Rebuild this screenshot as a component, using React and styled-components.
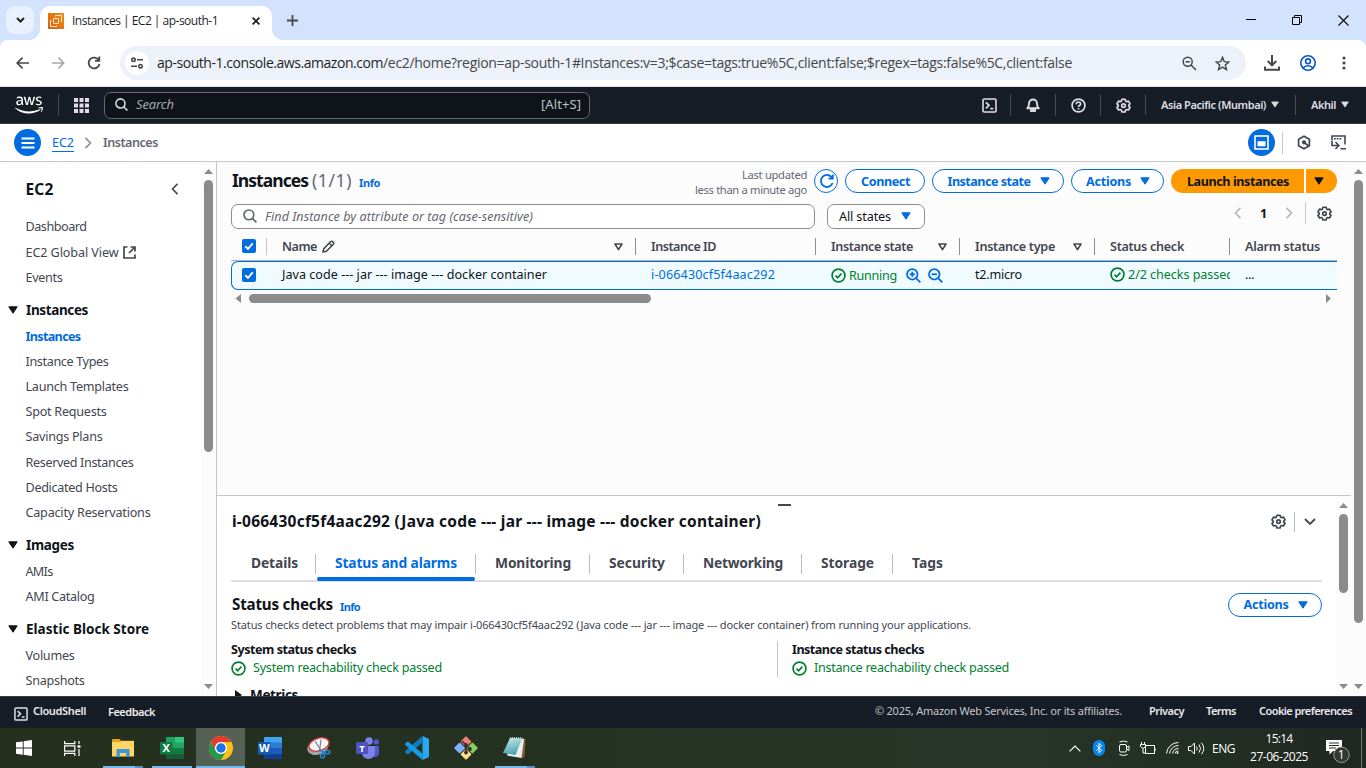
import React, { useLayoutEffect, useRef } from 'react';
import styled, { createGlobalStyle, css } from 'styled-components';
import { FaAws } from 'react-icons/fa';

const Global = createGlobalStyle`
  * { box-sizing: border-box; }
  body { margin: 0; overflow: hidden; background: #fff; }
  svg { display: block; flex: none; }
`;

const UI = `'Noto Sans', 'Open Sans', sans-serif`;
const SEGOE = `'Open Sans', 'Noto Sans', sans-serif`;

/* ---------- text that tracks itself to a given width ---------- */
const Fitted = styled.span`
  display: inline-block;
  white-space: pre;
`;
function Fit({ w, children }) {
  const ref = useRef(null);
  useLayoutEffect(() => {
    const el = ref.current;
    el.style.letterSpacing = '0px';
    const natural = el.getBoundingClientRect().width;
    el.style.letterSpacing = `${(w - natural) / el.textContent.length}px`;
  }, [w, children]);
  return <Fitted ref={ref}>{children}</Fitted>;
}

/* ---------- shared pieces ---------- */
const Screen = styled.div`
  width: 1366px;
  height: 768px;
  display: flex;
  flex-direction: column;
  overflow: hidden;
  font-family: ${UI};
  font-size: 12.6px;
  color: #0f141a;
`;
const Push = styled.div`flex: 1;`;
const Rule = styled.div`
  width: 1px;
  height: ${p => p.$h || 20}px;
  background: ${p => p.$c || '#b6bec9'};
  flex: none;
`;
const Slot = styled.div`
  width: ${p => p.$w}px;
  height: ${p => (p.$h ? `${p.$h}px` : 'auto')};
  padding-top: ${p => p.$pt || 0}px;
  display: flex;
  align-items: center;
  justify-content: center;
  flex: none;
`;

const Svg = ({ s = 16, w, h, box, children, ...rest }) => (
  <svg width={w || s} height={h || s} viewBox={box || `0 0 ${w || s} ${h || s}`} fill="none" {...rest}>{children}</svg>
);
const Down = ({ w = 10, h = 8, c = 'currentColor' }) => (
  <Svg w={w} h={h} box="0 0 10 8"><path d="M.8.8h8.4L5 7.2z" fill={c} stroke={c} strokeWidth="1" strokeLinejoin="round" /></Svg>
);
const SortMark = () => (
  <Svg w={9} h={8}><path d="M1 1h7L4.500 6.600z" stroke="#424650" strokeWidth="1.600" strokeLinejoin="round" /></Svg>
);
const Gear = ({ s = 16, c = '#424650' }) => (
  <Svg s={s} box="0 0 16 16" stroke={c} strokeWidth="1.800" strokeLinejoin="round">
    <path d="M6.300 1.300h3.400l.5 1.900 1.200.7 1.900-.5 1.700 2.900-1.400 1.200v1.200l1.400 1.200-1.700 2.900-1.900-.5-1.200.7-.5 1.900H6.300l-.5-1.900-1.200-.7-1.900.5L1 9.900l1.400-1.200V7.500L1 6.300l1.700-2.900 1.900.5 1.200-.7z" />
    <circle cx="8" cy="8.100" r="1.900" />
  </Svg>
);
const Lens = ({ s = 16, c = '#656871', mark }) => (
  <Svg s={s} box="0 0 16 16" stroke={c} strokeWidth="1.900">
    <circle cx="6.700" cy="6.700" r="5.600" /><path d="M10.700 10.700 15.300 15.300" />
    {mark && <path d="M3.900 6.700h5.600" />}
    {mark === 'plus' && <path d="M6.700 3.900v5.600" />}
  </Svg>
);
const Terminal = ({ s = 15, c = '#dedee3' }) => (
  <Svg s={s} box="0 0 15 15" stroke={c}>
    <rect x="1" y="1" width="13" height="13" rx="1.200" strokeWidth="1.600" />
    <path d="M3.900 4.300 7 7.300l-3.100 3M8.300 10.700h3" strokeWidth="1.700" />
  </Svg>
);
const Ok = () => (
  <Svg s={15} stroke="#00802f" strokeWidth="1.700">
    <circle cx="7.500" cy="7.500" r="6.400" /><path d="m4.500 7.700 2.100 2.100 3.800-4.200" />
  </Svg>
);
const Chevron = ({ d = 'right', c = '#424650', w = 8, h = 13, t = 1.7 }) => (
  <Svg w={w} h={h} box="0 0 8 13" stroke={c} strokeWidth={t}>
    <path d={d === 'right' ? 'M1.300 1l5.400 5.500L1.300 12' : 'M6.700 1 1.300 6.500 6.700 12'} />
  </Svg>
);

/* ---------- browser chrome ---------- */
const TabStrip = styled.div`
  height: 40px;
  background: #d3e3fd;
  display: flex;
  align-items: center;
  font-family: ${SEGOE};
  font-size: 12px;
  color: #1f1f1f;
  flex: none;
`;
const TabSearch = styled.div`
  width: 28px;
  height: 28px;
  margin-left: 6px;
  border-radius: 9px;
  background: #e9f1fe;
  display: flex;
  align-items: center;
  justify-content: center;
`;
const Tab = styled.div`
  position: relative;
  width: 232px;
  height: 34px;
  margin: 6px 0 0 6px;
  padding: 0 12px 5px 8px;
  background: #fff;
  border-radius: 10px 10px 0 0;
  display: flex;
  align-items: center;
  gap: 8px;
  &::before, &::after {
    content: '';
    position: absolute;
    bottom: 0;
    width: 10px;
    height: 10px;
  }
  &::before { left: -10px; background: radial-gradient(circle at 0 0, transparent 9.500px, #fff 10px); }
  &::after { right: -10px; background: radial-gradient(circle at 100% 0, transparent 9.500px, #fff 10px); }
`;
const WinButtons = styled.div`
  display: flex;
  margin-left: auto;
`;
const ToolbarBack = styled.div`
  background: #d3e3fd;
  flex: none;
`;
const Toolbar = styled.div`
  height: 47px;
  background: #fff;
  border-bottom: 1px solid #dfe1e5;
  border-radius: 8px 8px 0 0;
  display: flex;
  align-items: center;
  color: #45474a;
`;
const UrlBar = styled.div`
  width: 1126px;
  height: 34px;
  margin: 0 8px 0 4px;
  padding: 0 16px 0 5px;
  border-radius: 17px;
  background: #ecf1fa;
  display: flex;
  align-items: center;
`;
const SiteInfo = styled.div`
  width: 24px;
  height: 24px;
  border-radius: 12px;
  background: #fff;
  margin-right: 8px;
  display: flex;
  align-items: center;
  justify-content: center;
`;
const Url = styled.div`
  margin-top: -1px;
  display: flex;
  font-family: ${SEGOE};
  font-size: 14px;
  color: #474747;
`;
const Host = styled.span`color: #1f1f1f;`;

const Browser = () => (
  <>
    <TabStrip>
      <TabSearch><Svg w={9} h={6} stroke="#1f1f1f" strokeWidth="2"><path d="M1 1l3.500 3.500L8 1" /></Svg></TabSearch>
      <Tab>
        <Svg s={16}>
          <defs><linearGradient id="tabOrange" x1="0" y1="1" x2="1" y2="0"><stop stopColor="#d4600f" /><stop offset="1" stopColor="#f58f0c" /></linearGradient></defs>
          <rect width="16" height="16" fill="url(#tabOrange)" />
          <g stroke="#fff" strokeWidth="1" opacity=".85"><rect x="5.500" y="5.500" width="5" height="5" rx=".6" /><path d="M7.500 3.500v-1h6v6h-1M8.500 12.500v1h-6v-6h1" /></g>
        </Svg>
        <Fit w={146}>Instances | EC2 | ap-south-1</Fit>
        <Push />
        <Svg s={8} stroke="#1f1f1f" strokeWidth="1.800"><path d="M.6.6l6.800 6.800M7.400.6.6 7.400" /></Svg>
      </Tab>
      <Slot $w={40}><Svg s={11} stroke="#474747" strokeWidth="1.800"><path d="M5.500 0v11M0 5.500h11" /></Svg></Slot>
      <WinButtons>
        <Slot $w={46}><Svg w={10} h={10}><path d="M0 4.500h10" stroke="#000" /></Svg></Slot>
        <Slot $w={46}><Svg s={10} stroke="#000"><path d="M.5 2.500h7v7h-7zM2.500 2.500v-2h7v7h-2" /></Svg></Slot>
        <Slot $w={46}><Svg s={11} stroke="#000" strokeWidth="1.100"><path d="M.5.5l10 10M10.500.5l-10 10" /></Svg></Slot>
      </WinButtons>
    </TabStrip>
    <ToolbarBack>
      <Toolbar>
        <Slot $w={44}><Svg w={13} h={12} stroke="#474747" strokeWidth="1.700"><path d="M6.500.6 1.200 6l5.300 5.400M1 6h12" /></Svg></Slot>
        <Slot $w={28}><Svg w={13} h={12} stroke="#a3a5a8" strokeWidth="1.500"><path d="M6.500.6 11.800 6l-5.300 5.400M12 6H0" /></Svg></Slot>
        <Slot $w={44}><Svg s={14} stroke="#474747" strokeWidth="1.800"><path d="M11.800 4.300A5.400 5.400 0 1 0 12.400 8M12.300.6v4.200H8" /></Svg></Slot>
        <UrlBar>
          <SiteInfo>
            <Svg w={12} h={12} stroke="#474747" strokeWidth="1.600"><circle cx="2.500" cy="2.800" r="1.700" /><path d="M6 2.800h6M0 9.200h6" /><circle cx="9.500" cy="9.200" r="1.700" /></Svg>
          </SiteInfo>
          <Url>
            <Host><Fit w={226}>ap-south-1.console.aws.amazon.com</Fit></Host>
            <Fit w={689}>/ec2/home?region=ap-south-1#Instances:v=3;$case=tags:true%5C,client:false;$regex=tags:false%5C,client:false</Fit>
          </Url>
          <Push />
          <Svg s={15} stroke="#474747" strokeWidth="1.500"><circle cx="5.700" cy="5.700" r="4.500" /><path d="m9 9 5 5M3.500 5.700h4.400" /></Svg>
          <Slot $w={18} />
          <Svg s={15} stroke="#474747" strokeWidth="1.400"><path d="m7.500 1.300 1.700 4.300 4.700.4-3.600 3 1.200 4.600-4-2.500-4 2.500L4.700 9 1.100 6l4.700-.4z" /></Svg>
        </UrlBar>
        <Slot $w={36}>
          <Svg w={16} h={16} stroke="#474747" strokeWidth="2"><path d="M8 0v10M3.700 6 8 10.300 12.300 6M1 11.500v3.200h14v-3.200" /></Svg>
        </Slot>
        <Slot $w={36}>
          <Svg s={16} stroke="#0b57d0" strokeWidth="1.600"><circle cx="8" cy="8" r="7.200" /><circle cx="8" cy="6.300" r="2.400" /><path d="M3 13c1.200-1.600 3-2.300 5-2.300s3.800.7 5 2.300" /></Svg>
        </Slot>
        <Slot $w={36}>
          <Svg w={4} h={14}><g fill="#474747"><circle cx="2" cy="2" r="1.600" /><circle cx="2" cy="7" r="1.600" /><circle cx="2" cy="12" r="1.600" /></g></Svg>
        </Slot>
      </Toolbar>
    </ToolbarBack>
  </>
);

/* ---------- AWS top navigation ---------- */
const Nav = styled.div`
  height: 37px;
  background: #161d26;
  border-bottom: 1px solid #353d48;
  display: flex;
  align-items: center;
  color: #dedee3;
  font-size: 11px;
  font-weight: 600;
  flex: none;
`;
const Logo = styled.div`
  width: 58px;
  padding-left: 15px;
  color: #fff;
`;
const NavSearch = styled.div`
  width: 486px;
  height: 27px;
  padding: 0 8px 2px 10px;
  border: 1px solid #656871;
  border-radius: 7px;
  background: #0f141a;
  display: flex;
  align-items: center;
  gap: 8px;
  font-size: 13px;
  font-weight: 400;
  color: #c0c2c8;
  i { flex: 1; color: #a4a7ae; }
`;
const NavMenu = styled.div`
  width: ${p => p.$w}px;
  display: flex;
  align-items: center;
  gap: 5px;
  padding: 0 0 1px 15px;
`;

const NAV_RULE = '#424a55';
const GRID = [0, 5.5, 11];
const TopNav = () => (
  <Nav>
    <Logo><FaAws size={28} /></Logo>
    <Rule $h={22} $c={NAV_RULE} />
    <Slot $w={44}>
      <Svg s={15}>
        {GRID.map(y => GRID.map(x => <rect key={`${x}-${y}`} x={x} y={y} width="4" height="4" fill="#dedee3" />))}
      </Svg>
    </Slot>
    <Slot $w={1} />
    <NavSearch><Lens s={13} c="#dedee3" /><i><Fit w={38}>Search</Fit></i><Fit w={40}>[Alt+S]</Fit></NavSearch>
    <Push />
    <Slot $w={42}><Terminal /></Slot>
    <Rule $h={22} $c={NAV_RULE} />
    <Slot $w={44}>
      <Svg w={14} h={14} stroke="#dedee3" strokeWidth="1.900"><path d="M1.300 10.300C3 9 3 7.500 3 5.500a4 4 0 0 1 8 0c0 2 0 3.500 1.700 4.800z" strokeLinejoin="round" /><path d="M5 12h4v1H5z" /></Svg>
    </Slot>
    <Rule $h={22} $c={NAV_RULE} />
    <Slot $w={44}>
      <Svg s={15} stroke="#dedee3" strokeWidth="1.700"><circle cx="7.500" cy="7.500" r="6.400" /><path d="M5.300 6.200c0-3 4.300-2.800 4.300-.3 0 1.500-2.100 1.500-2.100 3.100M7.500 9.900v1.500" /></Svg>
    </Slot>
    <Rule $h={22} $c={NAV_RULE} />
    <Slot $w={44}><Gear s={15} c="#dedee3" /></Slot>
    <Rule $h={20} $c={NAV_RULE} />
    <NavMenu $w={149}><Fit w={105}>Asia Pacific (Mumbai)</Fit><Down w={8} h={7} /></NavMenu>
    <Rule $h={20} $c={NAV_RULE} />
    <NavMenu $w={70}><Fit w={25}>Akhil</Fit><Down w={8} h={7} /></NavMenu>
  </Nav>
);

/* ---------- breadcrumb ---------- */
const Crumbs = styled.div`
  height: 38px;
  background: #fff;
  border-bottom: 1px solid #c6c6cd;
  display: flex;
  align-items: center;
  padding: 0 15px 0 14px;
  flex: none;
`;
const Round = styled.div`
  width: 27px;
  height: 27px;
  border-radius: 50%;
  background: #006ce0;
  display: flex;
  align-items: center;
  justify-content: center;
`;
const CrumbLink = styled.a`
  margin-left: 11px;
  height: 18px;
  line-height: 18px;
  border-bottom: 1px solid #006ce0;
  color: #006ce0;
`;
const CrumbHere = styled.span`
  color: #656871;
  font-weight: 600;
`;
const Breadcrumb = () => (
  <Crumbs>
    <Round><Svg w={14} h={12} stroke="#fff" strokeWidth="1.800"><path d="M.5 1.500h13M.5 6h13M.5 10.500h13" /></Svg></Round>
    <CrumbLink><Fit w={22}>EC2</Fit></CrumbLink>
    <Slot $w={28}><Chevron c="#8c8c94" h={12} /></Slot>
    <Slot $w={1} />
    <CrumbHere><Fit w={55}>Instances</Fit></CrumbHere>
    <Push />
    <Round>
      <Svg s={15} stroke="#fff"><rect x="1" y="1" width="13" height="13" strokeWidth="1.600" /><path d="M3.800 6.500h7.400v4.500H3.800z" fill="#fff" strokeWidth=".6" /></Svg>
    </Round>
    <Slot $w={7} />
    <Rule $h={22} $c="#c6c6cd" />
    <Slot $w={42}>
      <Svg w={14} h={15} stroke="#424650" strokeWidth="1.700"><path d="M7 1.200 12.400 4.300v6.400L7 13.800 1.600 10.700V4.300z" strokeLinejoin="round" /><path d="m7 7.500 4.500 3.200" /><circle cx="7" cy="7.300" r="1.300" fill="#424650" /></Svg>
    </Slot>
    <Slot $w={26}>
      <Svg w={15} h={15} stroke="#424650" strokeWidth="1.600"><path d="M1 5V1h13v8.500M3 3.800h1.800M5.700 3.800h1.800M8.500 3.800h1.800" /><path d="M1 5.500v5h6M4.500 7l3.300 3.500L4.500 14M9.500 13.800H15" /></Svg>
    </Slot>
  </Crumbs>
);

/* ---------- scroll bars ---------- */
const VBar = styled.div`
  width: 15px;
  flex: none;
  background: #fcfcfc;
  display: flex;
  flex-direction: column;
  align-items: center;
  padding: 7px 0;
`;
const VThumb = styled.div`
  width: 9px;
  height: ${p => p.$h}px;
  margin: 6px 0 auto;
  border-radius: 5px;
  background: #8b8b8b;
`;
const VScroll = ({ thumb }) => (
  <VBar>
    <Svg w={9} h={5}><path d="M0 5 4.500 0 9 5z" fill="#8b8b8b" /></Svg>
    <VThumb $h={thumb} />
    <Svg w={9} h={5}><path d="M0 0 4.500 5 9 0z" fill="#8b8b8b" /></Svg>
  </VBar>
);
const HBar = styled.div`
  height: 15px;
  margin-top: 1px;
  padding: 0 6px 0 4px;
  display: flex;
  align-items: center;
  justify-content: space-between;
`;
const HThumb = styled.div`
  width: 402px;
  height: 9px;
  margin: 0 auto 0 8px;
  border-radius: 5px;
  background: #8b8b8b;
`;

/* ---------- side navigation ---------- */
const Body = styled.div`
  height: 534px;
  display: flex;
  flex: none;
`;
const Side = styled.div`
  width: 217px;
  border-right: 1px solid #c6c6cd;
  display: flex;
  flex: none;
  overflow: hidden;
`;
const SideList = styled.div`
  flex: 1;
  height: 534px;
  overflow: hidden;
  padding-left: 25.500px;
`;
const SideHead = styled.div`
  height: 52.300px;
  padding: 1.500px 22px 0 0;
  display: flex;
  align-items: center;
  justify-content: space-between;
  font-size: 15.500px;
  font-weight: 700;
`;
const SideItem = styled.div`
  height: 25.200px;
  padding-top: .1px;
  display: flex;
  align-items: center;
  gap: 4px;
  color: ${p => (p.$on ? '#006ce0' : '#424650')};
  font-weight: ${p => (p.$on ? 700 : 400)};
`;
const SideGroup = styled.div`
  height: 33.600px;
  margin-left: -17.500px;
  padding-top: 6.400px;
  display: flex;
  align-items: center;
  gap: 8px;
  font-size: 13.500px;
  font-weight: 700;
`;
const MENU = [
  [null, 0, [['Dashboard', 61], ['EC2 Global View', 93], ['Events', 37]]],
  ['Instances', 62, [['Instances', 55], ['Instance Types', 83], ['Launch Templates', 103], ['Spot Requests', 81], ['Savings Plans', 77], ['Reserved Instances', 108], ['Dedicated Hosts', 92], ['Capacity Reservations', 125]]],
  ['Images', 48, [['AMIs', 27], ['AMI Catalog', 69]]],
  ['Elastic Block Store', 123, [['Volumes', 49], ['Snapshots', 59]]],
];
const Sidebar = () => (
  <Side>
    <SideList>
      <SideHead><Fit w={28}>EC2</Fit><Chevron d="left" h={12} /></SideHead>
      {MENU.map(([group, gw, items]) => (
        <React.Fragment key={group || 'top'}>
          {group && <SideGroup><Down /><Fit w={gw}>{group}</Fit></SideGroup>}
          {items.map(([name, w]) => (
            <SideItem key={name} $on={group === 'Instances' && name === 'Instances'}>
              <Fit w={w}>{name}</Fit>
              {name === 'EC2 Global View' && (
                <Svg s={13} stroke="#424650" strokeWidth="1.700"><path d="M4.500 1H1v11h11V8.500M7.500 1H12v4.500M12 1 6 7" /></Svg>
              )}
            </SideItem>
          ))}
        </React.Fragment>
      ))}
    </SideList>
    <VScroll thumb={272} />
  </Side>
);

/* ---------- instances list ---------- */
const Content = styled.div`
  flex: 1;
  min-width: 0;
  display: flex;
  flex-direction: column;
  background: #fcfcfd;
`;
const ListArea = styled.div`
  height: 333px;
  padding: 7px 14px 0;
`;
const HeadRow = styled.div`
  height: 24px;
  display: flex;
  align-items: center;
`;
const H1 = styled.div`
  padding-left: 1px;
  margin-top: -2px;
  font-size: 17.500px;
  font-weight: 700;
  display: flex;
  gap: 4px;
  span + span { font-weight: 400; color: #656871; }
`;
const Info = styled.a`
  margin-left: ${p => p.$ml || 7}px;
  padding-top: 3px;
  font-size: 11px;
  font-weight: 700;
  color: #006ce0;
`;
const Updated = styled.div`
  margin-right: 7px;
  padding-top: 1px;
  display: flex;
  flex-direction: column;
  align-items: flex-end;
  font-size: 11.200px;
  line-height: 15px;
  color: #656871;
`;
const Buttons = styled.div`
  display: flex;
  gap: 7px;
`;
const Pill = styled.div`
  width: ${p => p.$w}px;
  height: 24px;
  padding-left: 1px;
  border: 1.500px solid #006ce0;
  border-radius: 13px;
  background: #fff;
  display: flex;
  align-items: center;
  justify-content: center;
  gap: 9px;
  font-size: 12.600px;
  font-weight: 700;
  color: #006ce0;
  ${p => p.$primary && css`
    border: 0;
    background: #ff9900;
    color: #0f141a;
    border-radius: ${p.$primary === 'left' ? '12px 0 0 12px' : '0 12px 12px 0'};
  `}
  ${p => p.$primary === 'right' && css`padding: 0 5px 0 0;`}
`;
const Split = styled.div`
  display: flex;
  gap: 2px;
`;
const FilterRow = styled.div`
  height: 25px;
  margin-top: 11px;
  display: flex;
  align-items: center;
`;
const Field = styled.div`
  width: ${p => p.$w}px;
  height: 25px;
  margin-right: 12px;
  padding: 0 11px 1px;
  border: 1px solid #8c8c94;
  border-radius: 7px;
  background: #fff;
  display: flex;
  align-items: center;
  gap: ${p => p.$gap || 8}px;
  i { color: #656871; }
`;
const PageNo = styled.div`
  width: 43px;
  text-align: center;
  font-weight: 700;
`;
const Pager = styled.div`
  display: flex;
  align-items: center;
  margin: -7px 5px 0 0;
`;
const Cols = styled.div`
  display: grid;
  grid-template-columns: ${p => p.$first || 36}px 369px 180px 144px 135px 135px 107px;
  align-items: center;
`;
const THead = styled(Cols)`
  height: 32px;
  padding-top: 4px;
  border-bottom: 1px solid #b4b4bb;
  font-weight: 600;
  color: #424650;
`;
const Th = styled.div`
  height: 17px;
  padding: 0 ${p => (p.$pl ? 0 : 12)}px 0 ${p => p.$pl ?? 15}px;
  border-right: ${p => (p.$last ? 0 : 1)}px solid ${p => p.$c || '#8c8c94'};
  display: flex;
  align-items: center;
  gap: 5px;
`;
const TRow = styled(Cols)`
  height: 29px;
  border: 1px solid #006ce0;
  border-right: 0;
  border-radius: 7px 0 0 7px;
  background: #f0fbff;
`;
const Td = styled.div`
  margin-top: ${p => (p.$up ? -2 : 0)}px;
  padding-left: ${p => p.$pl ?? 15}px;
  display: flex;
  align-items: center;
  gap: 3px;
  overflow: hidden;
  white-space: nowrap;
  color: ${p => p.$c || 'inherit'};
`;
const Box = styled.div`
  width: 14px;
  height: 14px;
  margin-bottom: 1px;
  border-radius: 2px;
  background: #006ce0;
  display: flex;
  align-items: center;
  justify-content: center;
  flex: none;
`;
const Check = () => <Box><Svg s={10} stroke="#fff" strokeWidth="1.900"><path d="m1.300 5.300 2.700 2.600 4.700-5.600" /></Svg></Box>;

const List = () => (
  <ListArea>
    <HeadRow>
      <H1><Fit w={76}>Instances</Fit><Fit w={40}>(1/1)</Fit></H1>
      <Info><Fit w={21}>Info</Fit></Info>
      <Push />
      <Updated><Fit w={65}>Last updated</Fit><Fit w={112}>less than a minute ago</Fit></Updated>
      <Buttons>
        <Pill $w={24}>
          <Svg s={14} stroke="#006ce0" strokeWidth="1.800"><path d="M12.600 9A6 6 0 1 1 12 3.700M12.800.5v4.200H8.500" /></Svg>
        </Pill>
        <Pill $w={80}><Fit w={49}>Connect</Fit></Pill>
        <Pill $w={132}><Fit w={83}>Instance state</Fit><Down /></Pill>
        <Pill $w={93}><Fit w={45}>Actions</Fit><Down /></Pill>
        <Split>
          <Pill $w={133} $primary="left"><Fit w={102}>Launch instances</Fit></Pill>
          <Pill $w={31} $primary="right"><Down /></Pill>
        </Split>
      </Buttons>
    </HeadRow>
    <FilterRow>
      <Field $w={584}><Lens s={14} /><i><Fit w={268}>Find Instance by attribute or tag (case-sensitive)</Fit></i></Field>
      <Field $w={98} $gap={10}><Fit w={52}>All states</Fit><Down c="#006ce0" /></Field>
      <Push />
      <Pager>
        <Chevron d="left" c="#b4b4bb" h={12} /><PageNo>1</PageNo><Chevron c="#b4b4bb" h={12} />
        <Slot $w={24}><Rule $h={22} $c="#c6c6cd" /></Slot>
        <Gear s={15} />
      </Pager>
    </FilterRow>
    <THead>
      <Th $pl={11} $c="#c6c6cd"><Check /></Th>
      <Th>
        <Fit w={35}>Name</Fit>
        <Svg s={13} stroke="#424650" strokeWidth="1.600"><path d="M1 12 1.700 8.800 8.500 1.800c1.500-1.500 4.200 1.100 2.700 2.700L4.400 11.300zM7.200 3.200l2.600 2.600" strokeLinejoin="round" /></Svg>
        <Push /><SortMark />
      </Th>
      <Th><Fit w={65}>Instance ID</Fit></Th>
      <Th><Fit w={82}>Instance state</Fit><Push /><SortMark /></Th>
      <Th><Fit w={80}>Instance type</Fit><Push /><SortMark /></Th>
      <Th><Fit w={74}>Status check</Fit></Th>
      <Th $last><Fit w={75}>Alarm status</Fit></Th>
    </THead>
    <TRow $first={35}>
      <Td $pl={10}><Check /></Td>
      <Td $up><Fit w={265}>Java code --- jar --- image --- docker container</Fit></Td>
      <Td $up $c="#006ce0"><Fit w={124}>i-066430cf5f4aac292</Fit></Td>
      <Td $c="#00802f">
        <Ok /><Fit w={48}>Running</Fit><Slot $w={3} /><Lens s={15} c="#006ce0" mark="plus" /><Slot $w={1} /><Lens s={15} c="#006ce0" mark="minus" />
      </Td>
      <Td $up><Fit w={47}>t2.micro</Fit></Td>
      <Td $up $c="#00802f"><Ok /><Fit w={106}>2/2 checks passed</Fit></Td>
      <Td $up><Fit w={9}>...</Fit></Td>
    </TRow>
    <HBar>
      <Svg w={6} h={9}><path d="M6 0 .5 4.500 6 9z" fill="#8b8b8b" /></Svg>
      <HThumb />
      <Svg w={5} h={9}><path d="M0 0l5 4.500L0 9z" fill="#8b8b8b" /></Svg>
    </HBar>
  </ListArea>
);

/* ---------- details panel ---------- */
const Panel = styled.div`
  height: 201px;
  border-top: 1px solid #c6c6cd;
  background: #fff;
  display: flex;
  overflow: hidden;
`;
const PanelBody = styled.div`
  flex: 1;
  min-width: 0;
  padding: 0 14px;
  display: flex;
  flex-direction: column;
`;
const Handle = styled.div`
  width: 13px;
  height: 2px;
  margin: 8px 531px 0 auto;
  background: #424650;
  flex: none;
`;
const PanelHead = styled.div`
  height: 31px;
  padding: 0 5px 0 1px;
  display: flex;
  align-items: center;
  flex: none;
`;
const PanelTitle = styled.div`
  margin-top: -2px;
  font-size: 15.500px;
  font-weight: 700;
`;
const Tabs = styled.div`
  height: 45px;
  border-bottom: 2px solid #dedee3;
  display: flex;
  font-size: 13.800px;
  font-weight: 700;
  color: #424650;
  flex: none;
`;
const TabItem = styled.div`
  position: relative;
  width: ${p => p.$w}px;
  padding-left: 20px;
  padding-bottom: 8px;
  display: flex;
  align-items: flex-end;
  line-height: 18px;
  color: ${p => (p.$on ? '#006ce0' : 'inherit')};
  &::before {
    content: '';
    position: absolute;
    left: 0;
    top: 17px;
    width: 1px;
    height: 20px;
    background: ${p => (p.$first ? 'transparent' : '#b6bec9')};
  }
  ${p => p.$on && css`
    &::after {
      content: '';
      position: absolute;
      left: 2px;
      right: 0;
      bottom: -1px;
      height: 4px;
      border-radius: 2px;
      background: #006ce0;
    }
  `}
`;
const SectionHead = styled.div`
  height: 35px;
  padding: 10px 0 0 1px;
  display: flex;
  align-items: center;
  flex: none;
`;
const SectionTitle = styled.div`
  margin-top: -2px;
  font-size: 15.200px;
  font-weight: 700;
`;
const Note = styled.div`
  height: 16px;
  line-height: 15px;
  font-size: 11px;
  color: #424650;
  flex: none;
`;
const Checks = styled.div`
  height: 36px;
  margin-top: 8px;
  display: flex;
  flex: none;
`;
const CheckCol = styled.div`
  width: ${p => (p.$pl ? 545 : 546)}px;
  padding-left: ${p => p.$pl || 0}px;
  border-left: ${p => (p.$pl ? '1px solid #c6c6cd' : '0')};
  line-height: 18px;
`;
const CheckName = styled.div`
  font-size: 12.600px;
  font-weight: 700;
  height: 18px;
`;
const CheckState = styled.div`
  height: 18px;
  display: flex;
  align-items: center;
  gap: 7px;
  color: #00802f;
`;
const Metrics = styled.div`
  height: 24px;
  margin-top: 6px;
  padding-left: 4px;
  display: flex;
  align-items: center;
  gap: 8px;
  font-size: 13.500px;
  font-weight: 700;
  flex: none;
`;
const TABS = [['Details', 47, 84], ['Status and alarms', 122, 160], ['Monitoring', 76, 114], ['Security', 56, 94], ['Networking', 80, 118], ['Storage', 53, 91], ['Tags', 31, 80]];
const Details = () => (
  <Panel>
    <PanelBody>
      <Handle />
      <PanelHead>
        <PanelTitle><Fit w={529}>i-066430cf5f4aac292 (Java code --- jar --- image --- docker container)</Fit></PanelTitle>
        <Push />
        <Gear s={15} />
        <Slot $w={17}><Rule $h={20} /></Slot>
        <Slot $w={14}><Svg w={12} h={8} stroke="#424650" strokeWidth="1.800"><path d="m1 1 5 5 5-5" /></Svg></Slot>
      </PanelHead>
      <Tabs>
        {TABS.map(([name, w, tw], i) => (
          <TabItem key={name} $w={tw} $on={i === 1} $first={i === 0}><Fit w={w}>{name}</Fit></TabItem>
        ))}
      </Tabs>
      <SectionHead>
        <SectionTitle><Fit w={101}>Status checks</Fit></SectionTitle>
        <Info $ml={7}><Fit w={20}>Info</Fit></Info>
        <Push />
        <Pill $w={94}><Fit w={45}>Actions</Fit><Down /></Pill>
      </SectionHead>
      <Note><Fit w={740}>Status checks detect problems that may impair i-066430cf5f4aac292 (Java code --- jar --- image --- docker container) from running your applications.</Fit></Note>
      <Checks>
        <CheckCol>
          <CheckName><Fit w={125}>System status checks</Fit></CheckName>
          <CheckState><Ok /><Fit w={189}>System reachability check passed</Fit></CheckState>
        </CheckCol>
        <CheckCol $pl={14}>
          <CheckName><Fit w={132}>Instance status checks</Fit></CheckName>
          <CheckState><Ok /><Fit w={195}>Instance reachability check passed</Fit></CheckState>
        </CheckCol>
      </Checks>
      <Metrics>
        <Svg w={7} h={10}><path d="M0 0 7 5 0 10z" fill="#0f141a" /></Svg><Fit w={48}>Metrics</Fit>
      </Metrics>
    </PanelBody>
    <VScroll thumb={79} />
  </Panel>
);

/* ---------- footer ---------- */
const Foot = styled.div`
  height: 32px;
  padding: 0 14px;
  background: #161d26;
  border-top: 1px solid #353d48;
  display: flex;
  align-items: center;
  font-size: 11px;
  font-weight: 600;
  color: #ebebf0;
  flex: none;
`;
const FootText = styled.span`
  margin-left: ${p => p.$ml}px;
  margin-top: ${p => (p.$low ? -3 : -5)}px;
  font-weight: ${p => (p.$thin ? 400 : 600)};
  color: ${p => (p.$thin ? '#c6c6cd' : 'inherit')};
`;
const Footer = () => (
  <Foot>
    <Slot $w={14} $h={16} $pt={2}><Terminal s={14} /></Slot>
    <FootText $ml={5}><Fit w={53}>CloudShell</Fit></FootText>
    <FootText $ml={22} $low><Fit w={47}>Feedback</Fit></FootText>
    <Push />
    <FootText $thin $ml={0}><Fit w={247}>© 2025, Amazon Web Services, Inc. or its affiliates.</Fit></FootText>
    <FootText $ml={27}><Fit w={35}>Privacy</Fit></FootText>
    <FootText $ml={22}><Fit w={30}>Terms</Fit></FootText>
    <FootText $ml={23}><Fit w={93}>Cookie preferences</Fit></FootText>
  </Foot>
);

/* ---------- Windows task bar ---------- */
const Bar = styled.div`
  height: 40px;
  background: linear-gradient(90deg, #26301f 0%, #243222 40%, #263527 75%, #202821 100%);
  display: flex;
  align-items: center;
  font-family: ${SEGOE};
  font-size: 12px;
  color: #fff;
  flex: none;
`;
const TaskButton = styled.div`
  width: ${p => p.$w || 49}px;
  height: 40px;
  display: flex;
  align-items: center;
  justify-content: center;
  background: ${p => (p.$active ? '#566155' : 'transparent')};
  ${p => p.$line && css`
    background-image: linear-gradient(90deg, #76b9ed ${p.$line}px, #5f8fb8 ${p.$line}px);
    background-repeat: no-repeat;
    background-size: ${p.$active ? '49px' : '40px'} 2px;
    background-position: ${p.$active ? '0' : '5px'} 38px;
  `}
`;
const Clock = styled.div`
  width: 80px;
  text-align: center;
  line-height: 18px;
`;
const Office = ({ letter, c }) => (
  <Svg w={24} h={22}>
    <rect x="6" width="18" height="22" rx="1" fill={c[0]} />
    <rect x="6" y="5.500" width="18" height="5.500" fill={c[1]} />
    <rect x="6" y="11" width="18" height="5.500" fill={c[2]} />
    <rect x="6" y="16.500" width="18" height="5.500" fill={c[3]} />
    {letter === 'X' && <path d="M15 0h9v5.500h-9z" fill="#33c481" />}
    <rect y="5" width="12.500" height="12.500" rx="1" fill={c[4]} />
    <text x="6.200" y="15.200" fill="#fff" fontSize="11" fontWeight="700" fontFamily="Open Sans" textAnchor="middle">{letter}</text>
  </Svg>
);
const Taskbar = () => (
  <Bar>
    <TaskButton $w={48}>
      <Svg s={16}><path d="M0 2.300 6.800 1.400v6.200H0zM7.700 1.300 16 0v7.600H7.700zM0 8.500h6.800v6.200L0 13.700zM7.700 8.500H16V16l-8.300-1.200z" fill="#fff" /></Svg>
    </TaskButton>
    <TaskButton $w={48}>
      <Svg w={17} h={15} stroke="#fff" strokeWidth="1.200"><path d="M.6 0v2.600h10.200V0M.6 15v-2.600h10.200V15M.6 4.900h10.200v5.200H.6zM15 0v3M15 8v7" /><path d="M13.500 4.300h3v2.400h-3z" fill="#fff" stroke="none" /></Svg>
    </TaskButton>
    <Slot $w={2} />
    <TaskButton $line={32}>
      <Svg w={22} h={18}>
        <path d="M0 1.200Q0 0 1 0h6.500l1.500 1.800H22V16.500H0z" fill="#e8a317" /><path d="M0 3h8.500l1-1H22v15.500H0z" fill="#ffd565" />
        <path d="M4.500 18v-7q0-1 1-1h11q1 0 1 1v7h-3.300v-4H7.800v4z" fill="#3b97dd" />
      </Svg>
    </TaskButton>
    <TaskButton $line={40}><Office letter="X" c={['#21a366', '#21a366', '#107c41', '#185c37', '#107c41']} /></TaskButton>
    <TaskButton $active $line={49}>
      <Svg s={24}>
        <circle cx="12" cy="12" r="12" fill="#fbc116" />
        <path d="M1.600 6A12 12 0 0 1 22.400 6H12a6 6 0 0 0-5.200 9z" fill="#e33b2e" />
        <path d="M1.600 6A12 12 0 0 0 12 24l5.200-9A6 6 0 0 1 6.800 15z" fill="#229a4d" />
        <circle cx="12" cy="12" r="6" fill="#fff" /><circle cx="12" cy="12" r="4.700" fill="#1a73e8" />
      </Svg>
    </TaskButton>
    <TaskButton><Office letter="W" c={['#41a5ee', '#2b7cd3', '#185abd', '#103f91', '#185abd']} /></TaskButton>
    <TaskButton>
      <Svg w={24} h={22}>
        <ellipse cx="11" cy="10" rx="11" ry="7.500" transform="rotate(-20 11 10)" fill="#a5a8aa" />
        <ellipse cx="12" cy="7.500" rx="10.300" ry="6.300" transform="rotate(-18 12 7.500)" fill="#f4f6f7" stroke="#d8363a" strokeWidth="1.300" />
        <path d="m8 4 7 11M14 2.500 12.500 14" stroke="#7b8288" strokeWidth="1.200" />
        <g stroke="#2a83c9" strokeWidth="1.600"><circle cx="15.500" cy="19" r="2" /><ellipse cx="20.500" cy="15" rx="2.400" ry="1.800" /><path d="m12 12.500 6 4M17 14l-1.500 3" /></g>
      </Svg>
    </TaskButton>
    <TaskButton>
      <Svg w={24} h={22}>
        <circle cx="20.300" cy="5" r="2.700" fill="#5059c9" /><path d="M15 9h8v6a4 4 0 0 1-8 2z" fill="#5059c9" />
        <circle cx="13" cy="4" r="3.800" fill="#7b83eb" /><path d="M6 9h13v7a6.500 6 0 0 1-13 0z" fill="#7b83eb" />
        <rect y="5" width="12" height="12" rx="1" fill="#4b53bc" />
        <text x="6" y="14.500" fill="#fff" fontSize="9.500" fontWeight="700" fontFamily="Open Sans" textAnchor="middle">T</text>
      </Svg>
    </TaskButton>
    <TaskButton>
      <Svg s={24}>
        <path d="M17.500 0 24 3v18l-6.500 3z" fill="#2ba7f0" />
        <path d="M17.500 0v6.500L3 18.500 0 16.500v-1.300z" fill="#0d7cc4" /><path d="M17.500 24v-6.500L3 5.500 0 7.500v1.300z" fill="#169ae2" />
      </Svg>
    </TaskButton>
    <TaskButton>
      <Svg s={24}>
        <g transform="rotate(45 12 12)">
          <rect x="3.500" y="3.500" width="8" height="8" rx="1" fill="#f27d7d" /><rect x="12.500" y="3.500" width="8" height="8" rx="1" fill="#84cf5e" />
          <rect x="3.500" y="12.500" width="8" height="8" rx="1" fill="#7fb0ff" /><rect x="12.500" y="12.500" width="8" height="8" rx="1" fill="#ffe08a" />
        </g>
        <path d="m8 5 4 4v8M12 9l4 4" stroke="#3a2f28" strokeWidth="1.500" /><circle cx="12" cy="9" r="1.900" fill="#3a2f28" /><circle cx="12" cy="16.500" r="1.900" fill="#3a2f28" /><circle cx="16" cy="13" r="1.900" fill="#3a2f28" />
      </Svg>
    </TaskButton>
    <TaskButton $line={32}>
      <Svg w={24} h={22}>
        <defs><linearGradient id="pad" x1="0" y1="0" x2=".3" y2="1"><stop stopColor="#c9ecef" /><stop offset="1" stopColor="#4fa3b2" /></linearGradient></defs>
        <path d="m20 1 2.500 1-1 18-3 1.500z" fill="#8a5b2c" /><path d="M8 1.500 21 2l-2.500 19L4 18.500z" fill="#e9eeee" /><path d="M7 1 19 1.500 12.500 18 0 16z" fill="url(#pad)" /><path d="M7 1h12.500" stroke="#dfe6e6" strokeDasharray="1 1" strokeWidth="1.500" />
      </Svg>
    </TaskButton>
    <Push />
    <Slot $w={24}><Svg w={12} h={7} stroke="#fff" strokeWidth="1.200"><path d="m.6 6.400 5.400-5.400 5.400 5.400" /></Svg></Slot>
    <Slot $w={24}>
      <Svg w={12} h={16}><rect width="12" height="16" rx="6" fill="#0a84f0" /><path d="m3.500 5.300 5 5L6 12.800V3.200l2.500 2.500-5 5" stroke="#fff" /></Svg>
    </Slot>
    <Slot $w={25}>
      <Svg w={12} h={16} stroke="#fff"><rect x="1.500" y="4.500" width="7" height="7.500" rx="1.500" /><path d="m8.500 7.500 2.500-1.500v4.500L8.500 9M1.500 2Q5.500 0 9.500 2M1.500 14.500q4 2 8 0" /></Svg>
    </Slot>
    <Slot $w={24}>
      <Svg w={16} h={13} stroke="#fff"><path d="M5.500 3.500h9v8h-9zM15 6v3M1.500 0v2.500M4.500 0v2.500M.5 2.500h5v2L3 6.500.5 4.500zM3 6.500V11h2" /></Svg>
    </Slot>
    <Slot $w={24}>
      <Svg w={13} h={12} stroke="#fff"><path d="M.5 11.500A12 12 0 0 1 12.500.5M3.500 11.500a9 9 0 0 1 9-8M6.500 11.500a6 6 0 0 1 6-5M9 11.500a3 3 0 0 1 3.500-2.500" /><circle cx="11.500" cy="11" r="1" fill="#fff" stroke="none" /></Svg>
    </Slot>
    <Slot $w={24}>
      <Svg w={17} h={13} stroke="#fff"><path d="M.5 4.500h2.500l3.500-3.500v11L3 8.500H.5zM8.500 4.500q1.500 2 0 4M11 2.500q3 4 0 8M13.500.8q4.500 5.700 0 11.400" /></Svg>
    </Slot>
    <Slot $w={31}><Fit w={23}>ENG</Fit></Slot>
    <Clock><div><Fit w={27}>15:14</Fit></div><div><Fit w={58}>27-06-2025</Fit></div></Clock>
    <Slot $w={38} $h={40} $pt={4}>
      <Svg w={24} h={25}>
        <path d="M0 2h16v11H7l-3.500 3.500V13H0z" fill="#fff" /><path d="M3 5h10M3 7.500h10M3 10h7" stroke="#263026" />
        <circle cx="15.500" cy="16.800" r="7.700" fill="#333735" stroke="#9aa09b" />
        <text x="15.300" y="20.800" fill="#fff" fontSize="12" fontFamily="Open Sans" textAnchor="middle">1</text>
      </Svg>
    </Slot>
    <Slot $w={4} />
    <Rule $h={40} $c="#6b736b" />
    <Slot $w={4} />
  </Bar>
);

export default function App() {
  return (
    <Screen>
      <Global />
      <Browser />
      <TopNav />
      <Breadcrumb />
      <Body>
        <Sidebar />
        <Content><List /><Details /></Content>
        <VScroll thumb={443} />
      </Body>
      <Footer />
      <Taskbar />
    </Screen>
  );
}
